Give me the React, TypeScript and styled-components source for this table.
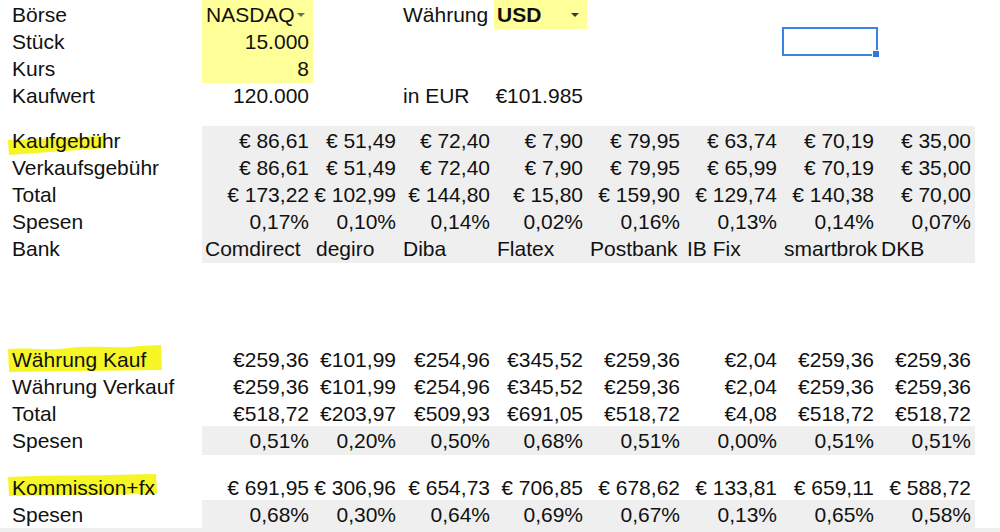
import React from 'react';
import styled, { createGlobalStyle } from 'styled-components';

const GlobalStyle = createGlobalStyle`
  html, body {
    margin: 0;
    padding: 0;
    background: #ffffff;
  }
  body {
    font-family: 'Liberation Sans', Arial, sans-serif;
    color: #111111;
  }
`;

// column widths as in the sheet (label + 8 banks)
const COLS = '202px 111px 87px 94px 93px 97px 97px 97px 97px';
const GREY = '#efefef';
const YELLOW = '#ffff99';

const Sheet = styled.div`
  width: 1000px;
  height: 532px;
  overflow: hidden;
  display: flex;
  flex-direction: column;
`;

const Row = styled.div<{ $h?: number }>`
  display: grid;
  grid-template-columns: ${COLS};
  height: ${p => p.$h ?? 27}px;
  flex-shrink: 0;
  font-size: 21px;
  line-height: 29px;
`;

const Spacer = styled.div<{ $h: number; $bg?: string }>`
  height: ${p => p.$h}px;
  flex-shrink: 0;
  background: ${p => p.$bg || 'transparent'};
`;

const Label = styled.div`
  position: relative;
  padding-left: 12px;
  white-space: nowrap;
`;

const LabelText = styled.span`
  position: relative;
  z-index: 1;
`;

const Cell = styled.div<{ $left?: boolean; $bg?: string; $bold?: boolean; $open?: boolean }>`
  position: relative;
  white-space: nowrap;
  overflow: ${p => (p.$open ? 'visible' : 'hidden')};
  text-align: ${p => (p.$left ? 'left' : 'right')};
  padding: ${p => (p.$left ? '0 0 0 3px' : '0 4px 0 0')};
  background: ${p => p.$bg || 'transparent'};
  font-weight: ${p => (p.$bold ? 700 : 400)};
`;

const Arrow = styled.span<{ $dark?: boolean }>`
  position: absolute;
  right: 8px;
  top: 13px;
  width: 0;
  height: 0;
  border-left: 4px solid transparent;
  border-right: 4px solid transparent;
  border-top: 4px solid ${p => (p.$dark ? '#3a3a2a' : '#6e6e5a')};
`;

const Selection = styled.div`
  position: absolute;
  left: 1px;
  top: 0;
  right: 0;
  bottom: 0;
  border: 2px solid #3b82e6;
  box-sizing: border-box;
  pointer-events: none;
`;

const Handle = styled.div`
  position: absolute;
  right: -4px;
  bottom: -4px;
  width: 6px;
  height: 6px;
  background: #2f78e0;
  border: 1px solid #ffffff;
`;

const Marker = styled.svg`
  position: absolute;
  left: 0;
  top: 0;
  z-index: 0;
  overflow: visible;
`;

type HL = 'kauf' | 'waehrung' | 'komm';

const Highlight: React.FC<{ kind: HL }> = ({ kind }) => {
  if (kind === 'kauf') {
    return (
      <Marker width="110" height="30">
        <path d="M8 14 L104 10 L106 22 L9 29 Z" fill="#f6f626" />
      </Marker>
    );
  }
  if (kind === 'waehrung') {
    return (
      <Marker width="165" height="30">
        <path
          d="M8 4 C30 2 45 6 70 3 C95 0 120 4 140 1 L161 0 L162 25 L9 27 Z"
          fill="#f6f626"
        />
      </Marker>
    );
  }
  return (
    <Marker width="160" height="30">
      <path d="M8 4 C40 2 90 3 156 1 L157 21 L9 23 Z" fill="#f6f626" />
    </Marker>
  );
};

const DataRow: React.FC<{ label: string; values: string[]; grey?: boolean; hl?: HL; left?: boolean }> = ({
  label,
  values,
  grey,
  hl,
  left,
}) => (
  <Row>
    <Label>
      {hl && <Highlight kind={hl} />}
      <LabelText>{label}</LabelText>
    </Label>
    {values.map((v, i) => (
      <Cell key={i} $bg={grey ? GREY : undefined} $left={left}>
        {v}
      </Cell>
    ))}
  </Row>
);

const fees = {
  kauf: ['€ 86,61', '€ 51,49', '€ 72,40', '€ 7,90', '€ 79,95', '€ 63,74', '€ 70,19', '€ 35,00'],
  verkauf: ['€ 86,61', '€ 51,49', '€ 72,40', '€ 7,90', '€ 79,95', '€ 65,99', '€ 70,19', '€ 35,00'],
  total: ['€ 173,22', '€ 102,99', '€ 144,80', '€ 15,80', '€ 159,90', '€ 129,74', '€ 140,38', '€ 70,00'],
  spesen: ['0,17%', '0,10%', '0,14%', '0,02%', '0,16%', '0,13%', '0,14%', '0,07%'],
  // smartbroker is cut off by its cell in the sheet
  bank: ['Comdirect', 'degiro', 'Diba', 'Flatex', 'Postbank', 'IB Fix', 'smartbrok', 'DKB'],
};

const fx = {
  kauf: ['€259,36', '€101,99', '€254,96', '€345,52', '€259,36', '€2,04', '€259,36', '€259,36'],
  verkauf: ['€259,36', '€101,99', '€254,96', '€345,52', '€259,36', '€2,04', '€259,36', '€259,36'],
  total: ['€518,72', '€203,97', '€509,93', '€691,05', '€518,72', '€4,08', '€518,72', '€518,72'],
  spesen: ['0,51%', '0,20%', '0,50%', '0,68%', '0,51%', '0,00%', '0,51%', '0,51%'],
};

const komm = {
  total: ['€ 691,95', '€ 306,96', '€ 654,73', '€ 706,85', '€ 678,62', '€ 133,81', '€ 659,11', '€ 588,72'],
  spesen: ['0,68%', '0,30%', '0,64%', '0,69%', '0,67%', '0,13%', '0,65%', '0,58%'],
};

export default function App() {
  return (
    <>
      <GlobalStyle />
      <Sheet>
        <Row>
          <Label>Börse</Label>
          <Cell $left $bg={YELLOW} style={{ paddingLeft: 4 }}>
            NASDAQ
            <Arrow />
          </Cell>
          <Cell />
          <Cell $left>Währung</Cell>
          <Cell $left $bg={YELLOW} $bold>
            USD
            <Arrow $dark />
          </Cell>
        </Row>
        <Row>
          <Label>Stück</Label>
          <Cell $bg={YELLOW}>15.000</Cell>
          <Cell />
          <Cell />
          <Cell />
          <Cell />
          <Cell />
          <Cell $open>
            <Selection>
              <Handle />
            </Selection>
          </Cell>
        </Row>
        <Row>
          <Label>Kurs</Label>
          <Cell $bg={YELLOW}>8</Cell>
        </Row>
        <Row>
          <Label>Kaufwert</Label>
          <Cell>120.000</Cell>
          <Cell />
          <Cell $left>in EUR</Cell>
          <Cell>€101.985</Cell>
        </Row>
        <Spacer $h={18} />
        <DataRow label="Kaufgebühr" values={fees.kauf} grey hl="kauf" />
        <DataRow label="Verkaufsgebühr" values={fees.verkauf} grey />
        <DataRow label="Total" values={fees.total} grey />
        <DataRow label="Spesen" values={fees.spesen} grey />
        <DataRow label="Bank" values={fees.bank} grey left />
        <Spacer $h={84} />
        <DataRow label="Währung Kauf" values={fx.kauf} hl="waehrung" />
        <DataRow label="Währung Verkauf" values={fx.verkauf} />
        <DataRow label="Total" values={fx.total} />
        <DataRow label="Spesen" values={fx.spesen} grey />
        <Spacer $h={20} />
        <DataRow label="Kommission+fx" values={komm.total} hl="komm" />
        <DataRow label="Spesen" values={komm.spesen} grey />
        <Spacer $h={1} />
        <Spacer $h={10} $bg="#f0f0f0" />
      </Sheet>
    </>
  );
}
